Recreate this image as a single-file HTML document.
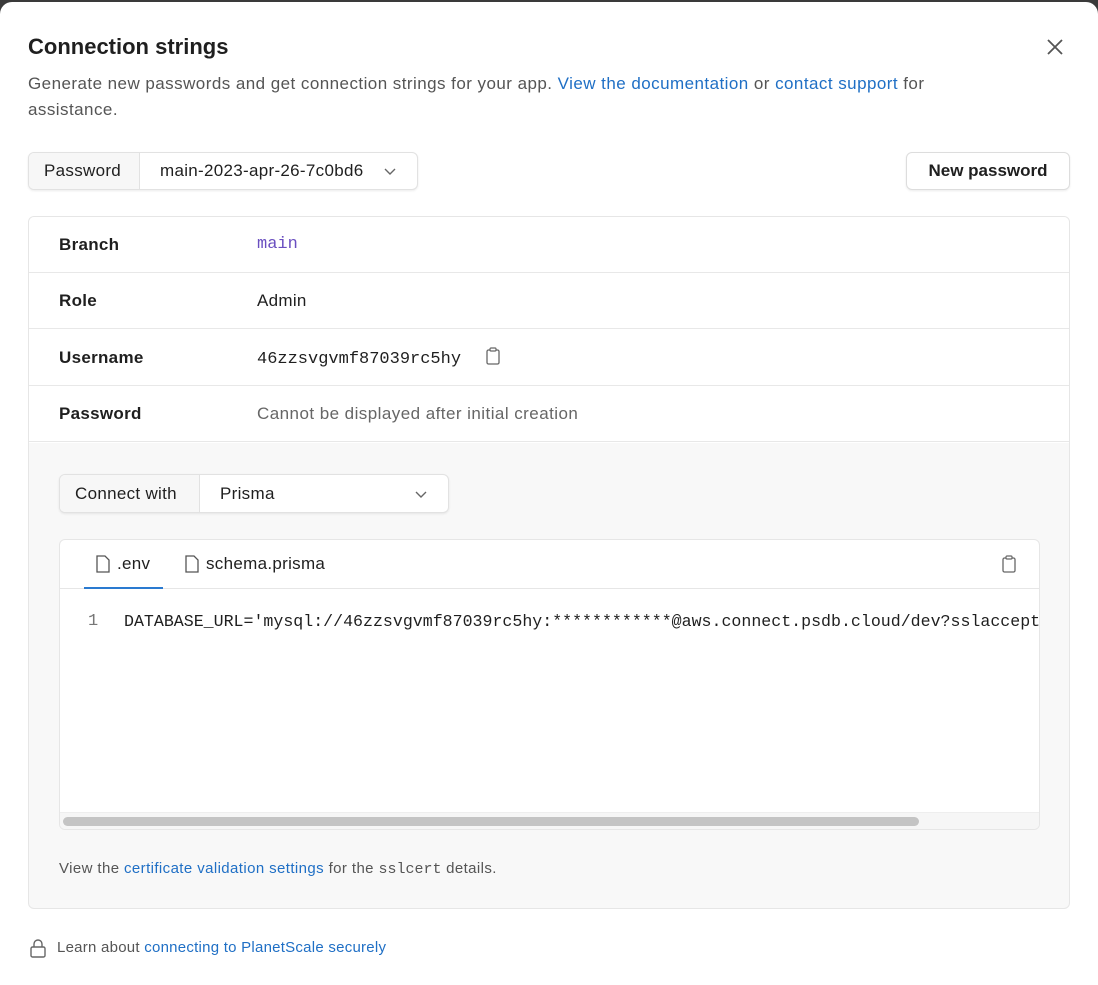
<!DOCTYPE html>
<html><head><meta charset="utf-8"><style>
*{box-sizing:border-box;margin:0;padding:0}
body{width:1098px;height:985px;background:#3a3a3a;font-family:"Liberation Sans",sans-serif;color:#1f1f1f;overflow:hidden;position:relative}
.modal{position:absolute;left:0;top:2px;width:1098px;height:983px;background:#fff;border-radius:12px 12px 0 0}
.abs{position:absolute}
a{color:#1f6fc5;text-decoration:none}
.mono{font-family:"Liberation Mono",monospace;letter-spacing:0}
.grp{position:absolute;display:flex;border:1px solid #e2e2e2;border-radius:6px;box-shadow:0 1px 2px rgba(0,0,0,.08);background:#fff;font-size:17px;overflow:hidden;letter-spacing:.3px}
.grp .l{background:#f7f7f7;border-right:1px solid #e2e2e2;display:flex;align-items:center;padding:0 15px}
.grp .v{display:flex;align-items:center;padding:0 20px;flex:1;justify-content:space-between}
.row{position:absolute;left:0;width:100%;height:56px;border-bottom:1px solid #e8e8e8;display:flex;align-items:center;font-size:17px;letter-spacing:.3px}
.row b{position:absolute;left:30px;font-weight:bold}
.row span{position:absolute;left:228px}
</style></head><body>
<div class="modal">
<div class="abs" style="left:28px;top:32px;font-size:22px;font-weight:bold">Connection strings</div>
<svg class="abs" style="left:1045px;top:35px" width="20" height="20" viewBox="0 0 20 20"><path d="M3 3L17 17M17 3L3 17" stroke="#555" stroke-width="1.8"/></svg>
<div class="abs" style="left:28px;top:69px;width:960px;font-size:17px;line-height:26px;color:#555;letter-spacing:.45px">Generate new passwords and get connection strings for your app. <a>View the documentation</a> or <a>contact support</a> for assistance.</div>
<div class="grp" style="left:28px;top:150px;width:390px;height:38px"><div class="l" style="width:111px">Password</div><div class="v">main-2023-apr-26-7c0bd6 <svg width="14" height="10" viewBox="0 0 14 10"><path d="M2 3l5 5 5-5" stroke="#666" fill="none" stroke-width="1.4"/></svg></div></div>
<div class="abs" style="left:906px;top:150px;width:164px;height:38px;border:1px solid #ddd;border-radius:6px;box-shadow:0 1px 2px rgba(0,0,0,.08);display:flex;align-items:center;justify-content:center;font-size:17px;font-weight:bold">New password</div>
<div class="abs" style="left:28px;top:214px;width:1042px;height:693px;border:1px solid #e6e6e6;border-radius:6px;background:#f8f8f8;overflow:hidden">
<div style="position:absolute;left:0;top:0;width:100%;height:226px;background:#fff"></div>
<div class="row" style="top:0"><b>Branch</b><span class="mono" style="color:#6a4fc0">main</span></div>
<div class="row" style="top:56px"><b>Role</b><span>Admin</span></div>
<div class="row" style="top:113px"><b>Username</b><span class="mono">46zzsvgvmf87039rc5hy <svg style="vertical-align:-2px;margin-left:14px" width="16" height="18" viewBox="0 0 16 18"><rect x="2" y="3" width="12" height="14" rx="1.5" fill="none" stroke="#666" stroke-width="1.3"/><rect x="5" y="1" width="6" height="3" rx="1" fill="#fff" stroke="#666" stroke-width="1.2"/></svg></span></div>
<div class="row" style="top:169px"><b>Password</b><span style="color:#666;letter-spacing:.45px">Cannot be displayed after initial creation</span></div>
<div class="grp" style="left:30px;top:257px;width:390px;height:39px"><div class="l" style="width:140px">Connect with</div><div class="v">Prisma <svg width="14" height="10" viewBox="0 0 14 10"><path d="M2 3l5 5 5-5" stroke="#666" fill="none" stroke-width="1.4"/></svg></div></div>
<div class="abs" style="left:30px;top:322px;width:981px;height:291px;background:#fff;border:1px solid #e6e6e6;border-radius:6px;overflow:hidden">
<div style="position:absolute;left:0;top:0;width:100%;height:49px;border-bottom:1px solid #e6e6e6"></div>
<div class="abs" style="left:35px;top:14px;font-size:17px;display:flex;align-items:center;gap:6px;letter-spacing:.3px"><svg width="16" height="18" viewBox="0 0 16 18"><path d="M2 1h8l4 4v12H2z" fill="none" stroke="#555" stroke-width="1.3"/></svg>.env</div>
<div class="abs" style="left:24px;top:47px;width:79px;height:2px;background:#2a7ad0"></div>
<div class="abs" style="left:124px;top:14px;font-size:17px;display:flex;align-items:center;gap:6px;letter-spacing:.3px"><svg width="16" height="18" viewBox="0 0 16 18"><path d="M2 1h8l4 4v12H2z" fill="none" stroke="#555" stroke-width="1.3"/></svg>schema.prisma</div>
<svg class="abs" style="left:941px;top:15px" width="16" height="18" viewBox="0 0 16 18"><rect x="2" y="3" width="12" height="14" rx="1.5" fill="none" stroke="#666" stroke-width="1.3"/><rect x="5" y="1" width="6" height="3" rx="1" fill="#fff" stroke="#666" stroke-width="1.2"/></svg>
<div class="abs mono" style="left:28px;top:72px;font-size:17px;color:#777">1</div>
<div class="abs mono" style="left:64px;top:72px;font-size:16.6px;white-space:nowrap">DATABASE_URL='mysql://46zzsvgvmf87039rc5hy:************@aws.connect.psdb.cloud/dev?sslaccept=strict'</div>
<div class="abs" style="left:0;top:272px;width:100%;height:19px;background:#f6f6f6;border-top:1px solid #eee"></div>
<div class="abs" style="left:3px;top:277px;width:856px;height:9px;background:#c4c4c4;border-radius:5px"></div>
</div>
<div class="abs" style="left:30px;top:643px;font-size:15px;color:#555;letter-spacing:.4px">View the <a>certificate validation settings</a> for the <span class="mono">sslcert</span> details.</div>
</div>
<svg class="abs" style="left:29px;top:936px" width="18" height="20" viewBox="0 0 18 20"><path d="M5 9V6a4 4 0 018 0v3" fill="none" stroke="#666" stroke-width="1.4"/><rect x="2" y="9" width="14" height="10" rx="1.5" fill="none" stroke="#666" stroke-width="1.4"/></svg>
<div class="abs" style="left:57px;top:937px;font-size:15px;color:#555;letter-spacing:.25px">Learn about <a>connecting to PlanetScale securely</a></div>
</div>
</body></html>
